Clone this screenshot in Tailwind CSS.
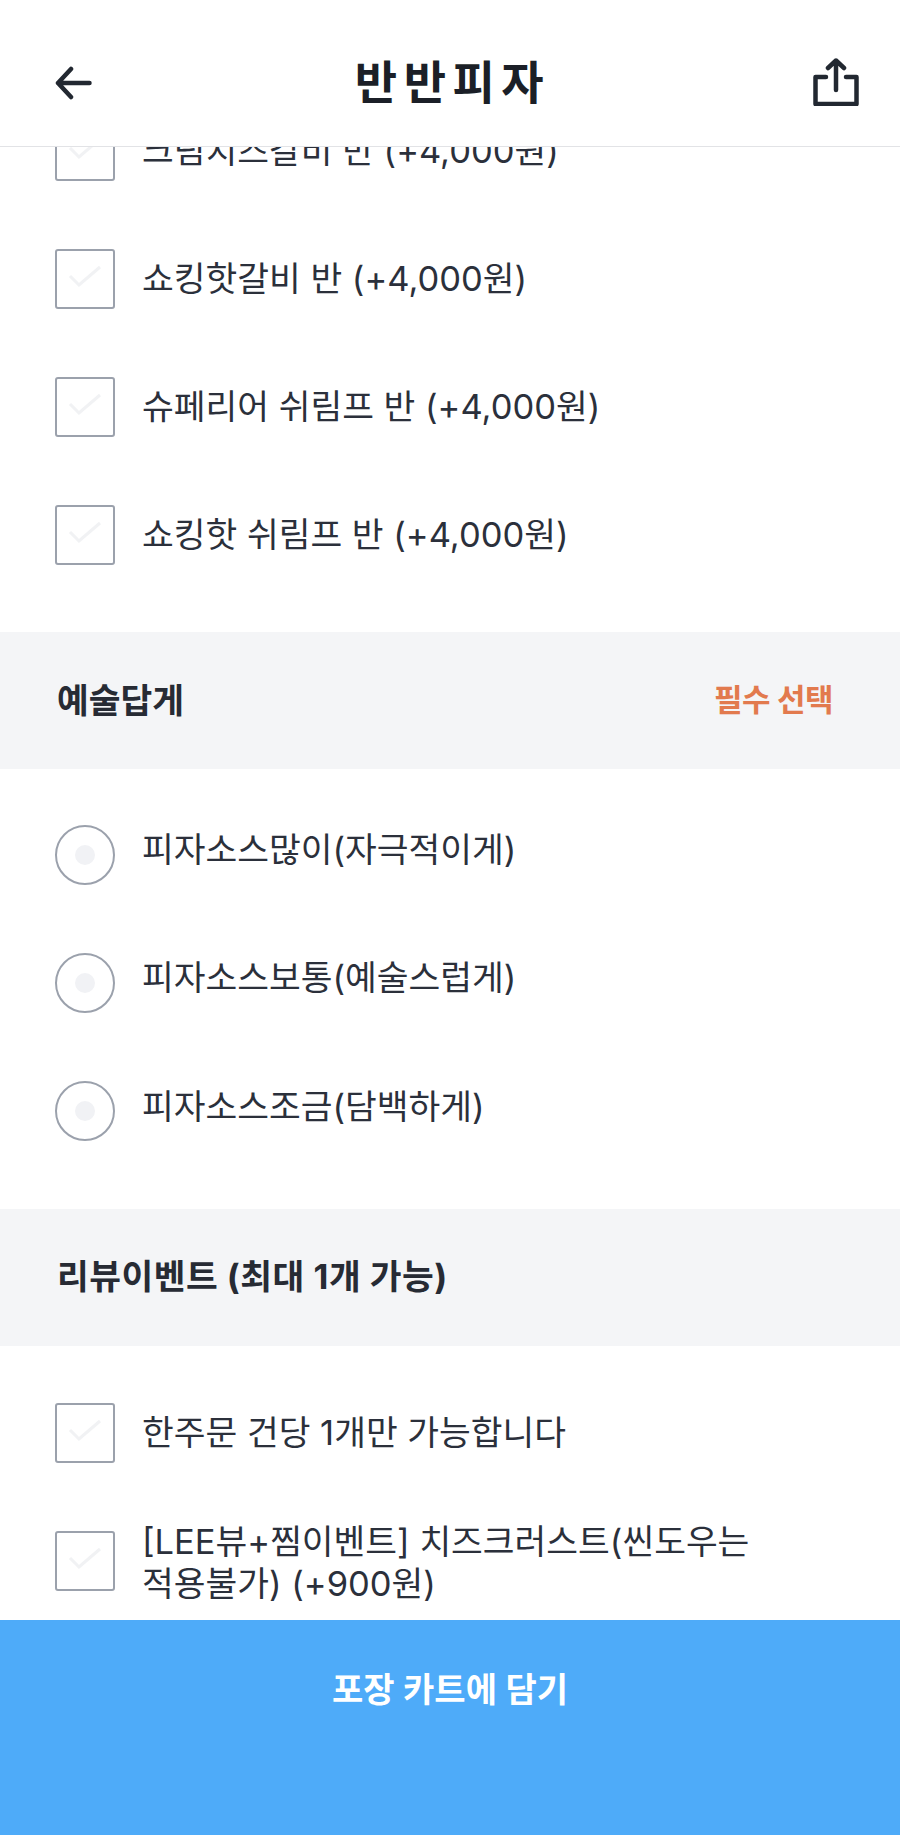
<!DOCTYPE html>
<html lang="ko">
<head>
    <meta charset="UTF-8">
    <meta name="viewport" content="width=device-width, initial-scale=1.0">
    <title>반반피자</title>
    <script src="https://cdn.jsdelivr.net/npm/@tailwindcss/browser@4"></script>
</head>
<body class="bg-white font-['Inter','Noto_Sans_CJK_KR',sans-serif] text-[#2b303b]">
    <div class="h-[1835px] w-[900px] flex flex-col overflow-hidden">
        <!-- header -->
        <header class="h-[147px] shrink-0 flex items-center justify-between pl-[55px] pr-[41px] pt-[18px] border-b border-[#e2e3e6] bg-white z-10">
            <svg class="w-[37px] h-[34px] mt-[2px]" viewBox="0 0 37 34" fill="none" stroke="#222831" stroke-width="4.5" stroke-linecap="round" stroke-linejoin="round">
                <path d="M34.500 17H3M16 3 3 17l13 14"/>
            </svg>
            <h1 class="text-[46px] leading-none font-bold text-[#1b1f27] tracking-[6.5px]">반반피자</h1>
            <svg class="w-[46px] h-[48px]" viewBox="0 0 46 48" fill="none" stroke="#222831" stroke-width="4.5" stroke-linecap="round" stroke-linejoin="round">
                <path d="M13 19H2.500v27h41V19H33M23 32V2.500M15 10l8-7.500 8 7.500"/>
            </svg>
        </header>

        <main class="flex-1 overflow-hidden">
            <div class="-mt-[26px]">
                <!-- 토핑 -->
                <div class="flex flex-col gap-[68px] pl-[55px] pb-[67px]">
                    <div class="flex items-center gap-[27px] h-[60px]">
                        <span class="w-[60px] h-[60px] shrink-0 rounded-[3px] border-[2.5px] border-[#9ba1ac] flex items-center justify-center">
                            <svg class="w-[34px] h-[24px] -mt-[6px]" viewBox="0 0 34 24" fill="none" stroke="#f1f2f4" stroke-width="3"><path d="M2 12l9 9L32 3"/></svg>
                        </span>
                        <span class="text-[34.500px] leading-[44px]">크림치즈갈비 반 (+4,000원)</span>
                    </div>
                    <div class="flex items-center gap-[27px] h-[60px]">
                        <span class="w-[60px] h-[60px] shrink-0 rounded-[3px] border-[2.5px] border-[#9ba1ac] flex items-center justify-center">
                            <svg class="w-[34px] h-[24px] -mt-[6px]" viewBox="0 0 34 24" fill="none" stroke="#f1f2f4" stroke-width="3"><path d="M2 12l9 9L32 3"/></svg>
                        </span>
                        <span class="text-[34.500px] leading-[44px]">쇼킹핫갈비 반 (+4,000원)</span>
                    </div>
                    <div class="flex items-center gap-[27px] h-[60px]">
                        <span class="w-[60px] h-[60px] shrink-0 rounded-[3px] border-[2.5px] border-[#9ba1ac] flex items-center justify-center">
                            <svg class="w-[34px] h-[24px] -mt-[6px]" viewBox="0 0 34 24" fill="none" stroke="#f1f2f4" stroke-width="3"><path d="M2 12l9 9L32 3"/></svg>
                        </span>
                        <span class="text-[34.500px] leading-[44px]">슈페리어 쉬림프 반 (+4,000원)</span>
                    </div>
                    <div class="flex items-center gap-[27px] h-[60px]">
                        <span class="w-[60px] h-[60px] shrink-0 rounded-[3px] border-[2.5px] border-[#9ba1ac] flex items-center justify-center">
                            <svg class="w-[34px] h-[24px] -mt-[6px]" viewBox="0 0 34 24" fill="none" stroke="#f1f2f4" stroke-width="3"><path d="M2 12l9 9L32 3"/></svg>
                        </span>
                        <span class="text-[34.500px] leading-[44px]">쇼킹핫 쉬림프 반 (+4,000원)</span>
                    </div>
                </div>

                <!-- 예술답게 -->
                <div class="h-[137px] bg-[#f4f5f7] flex items-center justify-between pl-[57px] pr-[67px]">
                    <h2 class="text-[34.500px] font-bold text-[#272b34]">예술답게</h2>
                    <span class="text-[31px] font-bold text-[#e27a4e] tracking-[-0.5px]">필수 선택</span>
                </div>
                <div class="flex flex-col gap-[68px] pl-[55px] pt-[56px] pb-[68px]">
                    <div class="flex items-center gap-[27px] h-[60px]">
                        <span class="w-[60px] h-[60px] shrink-0 rounded-full border-[2.5px] border-[#9ba1ac] flex items-center justify-center">
                            <span class="w-[20px] h-[20px] rounded-full bg-[#f1f2f5]"></span>
                        </span>
                        <span class="text-[34.500px] leading-[44px] -mt-[10px]">피자소스많이(자극적이게)</span>
                    </div>
                    <div class="flex items-center gap-[27px] h-[60px]">
                        <span class="w-[60px] h-[60px] shrink-0 rounded-full border-[2.5px] border-[#9ba1ac] flex items-center justify-center">
                            <span class="w-[20px] h-[20px] rounded-full bg-[#f1f2f5]"></span>
                        </span>
                        <span class="text-[34.500px] leading-[44px] -mt-[10px]">피자소스보통(예술스럽게)</span>
                    </div>
                    <div class="flex items-center gap-[27px] h-[60px]">
                        <span class="w-[60px] h-[60px] shrink-0 rounded-full border-[2.5px] border-[#9ba1ac] flex items-center justify-center">
                            <span class="w-[20px] h-[20px] rounded-full bg-[#f1f2f5]"></span>
                        </span>
                        <span class="text-[34.500px] leading-[44px] -mt-[8px]">피자소스조금(담백하게)</span>
                    </div>
                </div>

                <!-- 리뷰이벤트 -->
                <div class="h-[137px] bg-[#f4f5f7] flex items-center pl-[57px]">
                    <h2 class="text-[34.500px] font-bold text-[#272b34] tracking-[0.5px] -mt-[2px]">리뷰이벤트 (최대 1개 가능)</h2>
                </div>
                <div class="flex flex-col gap-[68px] pl-[55px] pt-[57px]">
                    <div class="flex items-center gap-[27px] h-[60px]">
                        <span class="w-[60px] h-[60px] shrink-0 rounded-[3px] border-[2.5px] border-[#9ba1ac] flex items-center justify-center">
                            <svg class="w-[34px] h-[24px] -mt-[6px]" viewBox="0 0 34 24" fill="none" stroke="#f1f2f4" stroke-width="3"><path d="M2 12l9 9L32 3"/></svg>
                        </span>
                        <span class="text-[34.500px] leading-[44px]">한주문 건당 1개만 가능합니다</span>
                    </div>
                    <div class="flex items-center gap-[27px] h-[60px]">
                        <span class="w-[60px] h-[60px] shrink-0 rounded-[3px] border-[2.5px] border-[#9ba1ac] flex items-center justify-center">
                            <svg class="w-[34px] h-[24px] -mt-[6px]" viewBox="0 0 34 24" fill="none" stroke="#f1f2f4" stroke-width="3"><path d="M2 12l9 9L32 3"/></svg>
                        </span>
                        <span class="text-[34.500px] leading-[42px] mt-[4px] w-[640px] break-keep">[LEE뷰+찜이벤트] 치즈크러스트(씬도우는 적용불가) (+900원)</span>
                    </div>
                </div>
            </div>
        </main>

        <!-- 하단 버튼 -->
        <button class="h-[215px] shrink-0 bg-[#4eabf9] text-white text-[34px] font-semibold pb-[77px] z-10">포장 카트에 담기</button>
    </div>
</body>
</html>
